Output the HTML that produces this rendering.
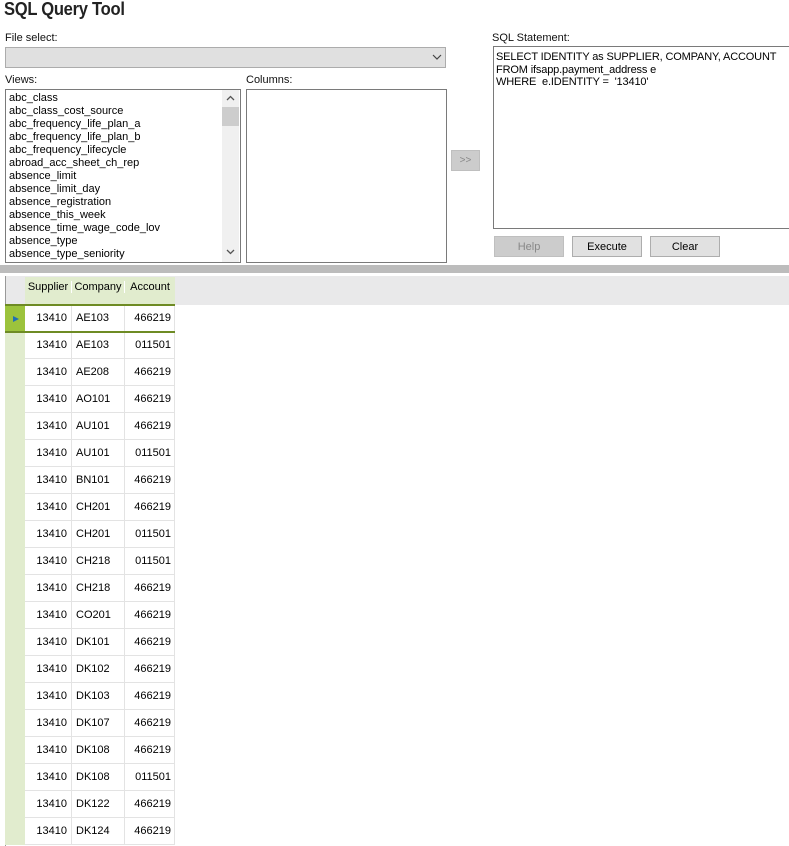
<!DOCTYPE html>
<html><head><meta charset="utf-8"><style>
*{box-sizing:border-box;margin:0;padding:0}
body{width:789px;height:846px;overflow:hidden;background:#fff;font-family:"Liberation Sans",sans-serif;font-size:11px;color:#000;position:relative}
.a{position:absolute}
.lbl{font-size:11px;color:#111}
.box{border:1px solid #7a7a7a;background:#fff}
.btn{border:1px solid #adadad;background:#e1e1e1;text-align:center;line-height:18px;font-size:11px}
.list div{height:13px;line-height:13px;padding-left:3px;white-space:nowrap}
.row{position:absolute;left:5px;height:27px;width:170px}
.row .ind{position:absolute;left:0;top:0;width:20px;height:27px;background:#e1ecce}
.row .c{position:absolute;top:0;height:27px;line-height:27px;border-right:1px solid #e3e3e3;border-bottom:1px solid #e3e3e3;font-size:11px}
</style></head><body>
<div class="a" style="left:4px;top:-1px;font-size:18px;font-weight:bold;color:#222;letter-spacing:-0.3px;transform:scaleX(0.92);transform-origin:left">SQL Query Tool</div>
<div class="a lbl" style="left:5px;top:32px">File select:</div>
<div class="a" style="left:5px;top:47px;width:441px;height:21px;background:#e0e0e0;border:1px solid #acacac"></div>
<svg class="a" style="left:432px;top:54px" width="10" height="7"><path d="M1 1L5 5L9 1" stroke="#444" fill="none" stroke-width="1.2"/></svg>
<div class="a lbl" style="left:5px;top:74px">Views:</div>
<div class="a lbl" style="left:246px;top:74px">Columns:</div>
<div class="a box list" style="left:5px;top:89px;width:236px;height:174px;padding-top:2px;overflow:hidden">
<div>abc_class</div><div>abc_class_cost_source</div><div>abc_frequency_life_plan_a</div><div>abc_frequency_life_plan_b</div><div>abc_frequency_lifecycle</div><div>abroad_acc_sheet_ch_rep</div><div>absence_limit</div><div>absence_limit_day</div><div>absence_registration</div><div>absence_this_week</div><div>absence_time_wage_code_lov</div><div>absence_type</div><div>absence_type_seniority</div>
</div>
<div class="a" style="left:222px;top:90px;width:17px;height:172px;background:#f0f0f0"></div>
<div class="a" style="left:222px;top:107px;width:17px;height:19px;background:#cdcdcd"></div>
<svg class="a" style="left:226px;top:95px" width="9" height="6"><path d="M1 5L4.5 1.5L8 5" stroke="#555" fill="none" stroke-width="1.3"/></svg>
<svg class="a" style="left:226px;top:249px" width="9" height="6"><path d="M1 1L4.5 4.5L8 1" stroke="#555" fill="none" stroke-width="1.3"/></svg>
<div class="a box" style="left:246px;top:89px;width:201px;height:174px"></div>
<div class="a" style="left:451px;top:150px;width:29px;height:21px;background:#ccc;border:1px solid #bfbfbf;color:#888;text-align:center;line-height:19px;font-size:10px">&gt;&gt;</div>
<div class="a lbl" style="left:492px;top:32px">SQL Statement:</div>
<div class="a box" style="left:493px;top:46px;width:300px;height:183px;padding:4px 2px;line-height:12.5px;font-size:11px;letter-spacing:-0.15px">SELECT IDENTITY as SUPPLIER, COMPANY, ACCOUNT<br>FROM ifsapp.payment_address e<br>WHERE&nbsp; e.IDENTITY =&nbsp; '13410'</div>
<div class="a btn" style="left:494px;top:236px;width:70px;height:21px;background:#ccc;border-color:#bfbfbf;color:#888;line-height:21px">Help</div>
<div class="a btn" style="left:572px;top:236px;width:70px;height:21px;line-height:21px">Execute</div>
<div class="a btn" style="left:650px;top:236px;width:70px;height:21px;line-height:21px">Clear</div>
<div class="a" style="left:0;top:265px;width:789px;height:8px;background:#bcbcbc"></div>
<div class="a" style="left:5px;top:276px;width:784px;height:29px;background:#e9e9ea;border-left:1px solid #999"></div>
<div class="a" style="left:5px;top:276px;width:1px;height:570px;background:#999"></div>
<div class="a" style="left:25px;top:277px;width:150px;height:28px;background:#e1ecce"></div>
<div class="a" style="left:25px;top:281px;width:47px;text-align:center;border-right:1px solid #fff">Supplier</div>
<div class="a" style="left:72px;top:281px;width:53px;text-align:center;border-right:1px solid #fff">Company</div>
<div class="a" style="left:125px;top:281px;width:50px;text-align:center">Account</div>
<div id="g"></div>
<script>
var d=[["AE103","466219"],["AE103","011501"],["AE208","466219"],["AO101","466219"],["AU101","466219"],["AU101","011501"],["BN101","466219"],["CH201","466219"],["CH201","011501"],["CH218","011501"],["CH218","466219"],["CO201","466219"],["DK101","466219"],["DK102","466219"],["DK103","466219"],["DK107","466219"],["DK108","466219"],["DK108","011501"],["DK122","466219"],["DK124","466219"]];
var h="";
d.forEach(function(r,i){var t=305+27*i;
h+='<div class="row" style="top:'+t+'px"><div class="ind" style="'+(i==0?'background:#9cc33c':'')+'"></div>'+
'<div class="c" style="left:20px;width:47px;text-align:right;padding-right:4px">13410</div>'+
'<div class="c" style="left:67px;width:53px;padding-left:4px">'+r[0]+'</div>'+
'<div class="c" style="left:120px;width:50px;text-align:right;padding-right:3px">'+r[1]+'</div></div>';});
h+='<div class="a" style="left:5px;top:304px;width:170px;height:2px;background:#6e8b24"></div>';
h+='<div class="a" style="left:5px;top:331px;width:170px;height:2px;background:#6e8b24"></div>';
h+='<svg class="a" style="left:12px;top:315px" width="8" height="8"><path d="M1 1L7 4L1 7Z" fill="#1f6fb5"/></svg>';
document.getElementById("g").innerHTML=h;
</script>
</body></html>
